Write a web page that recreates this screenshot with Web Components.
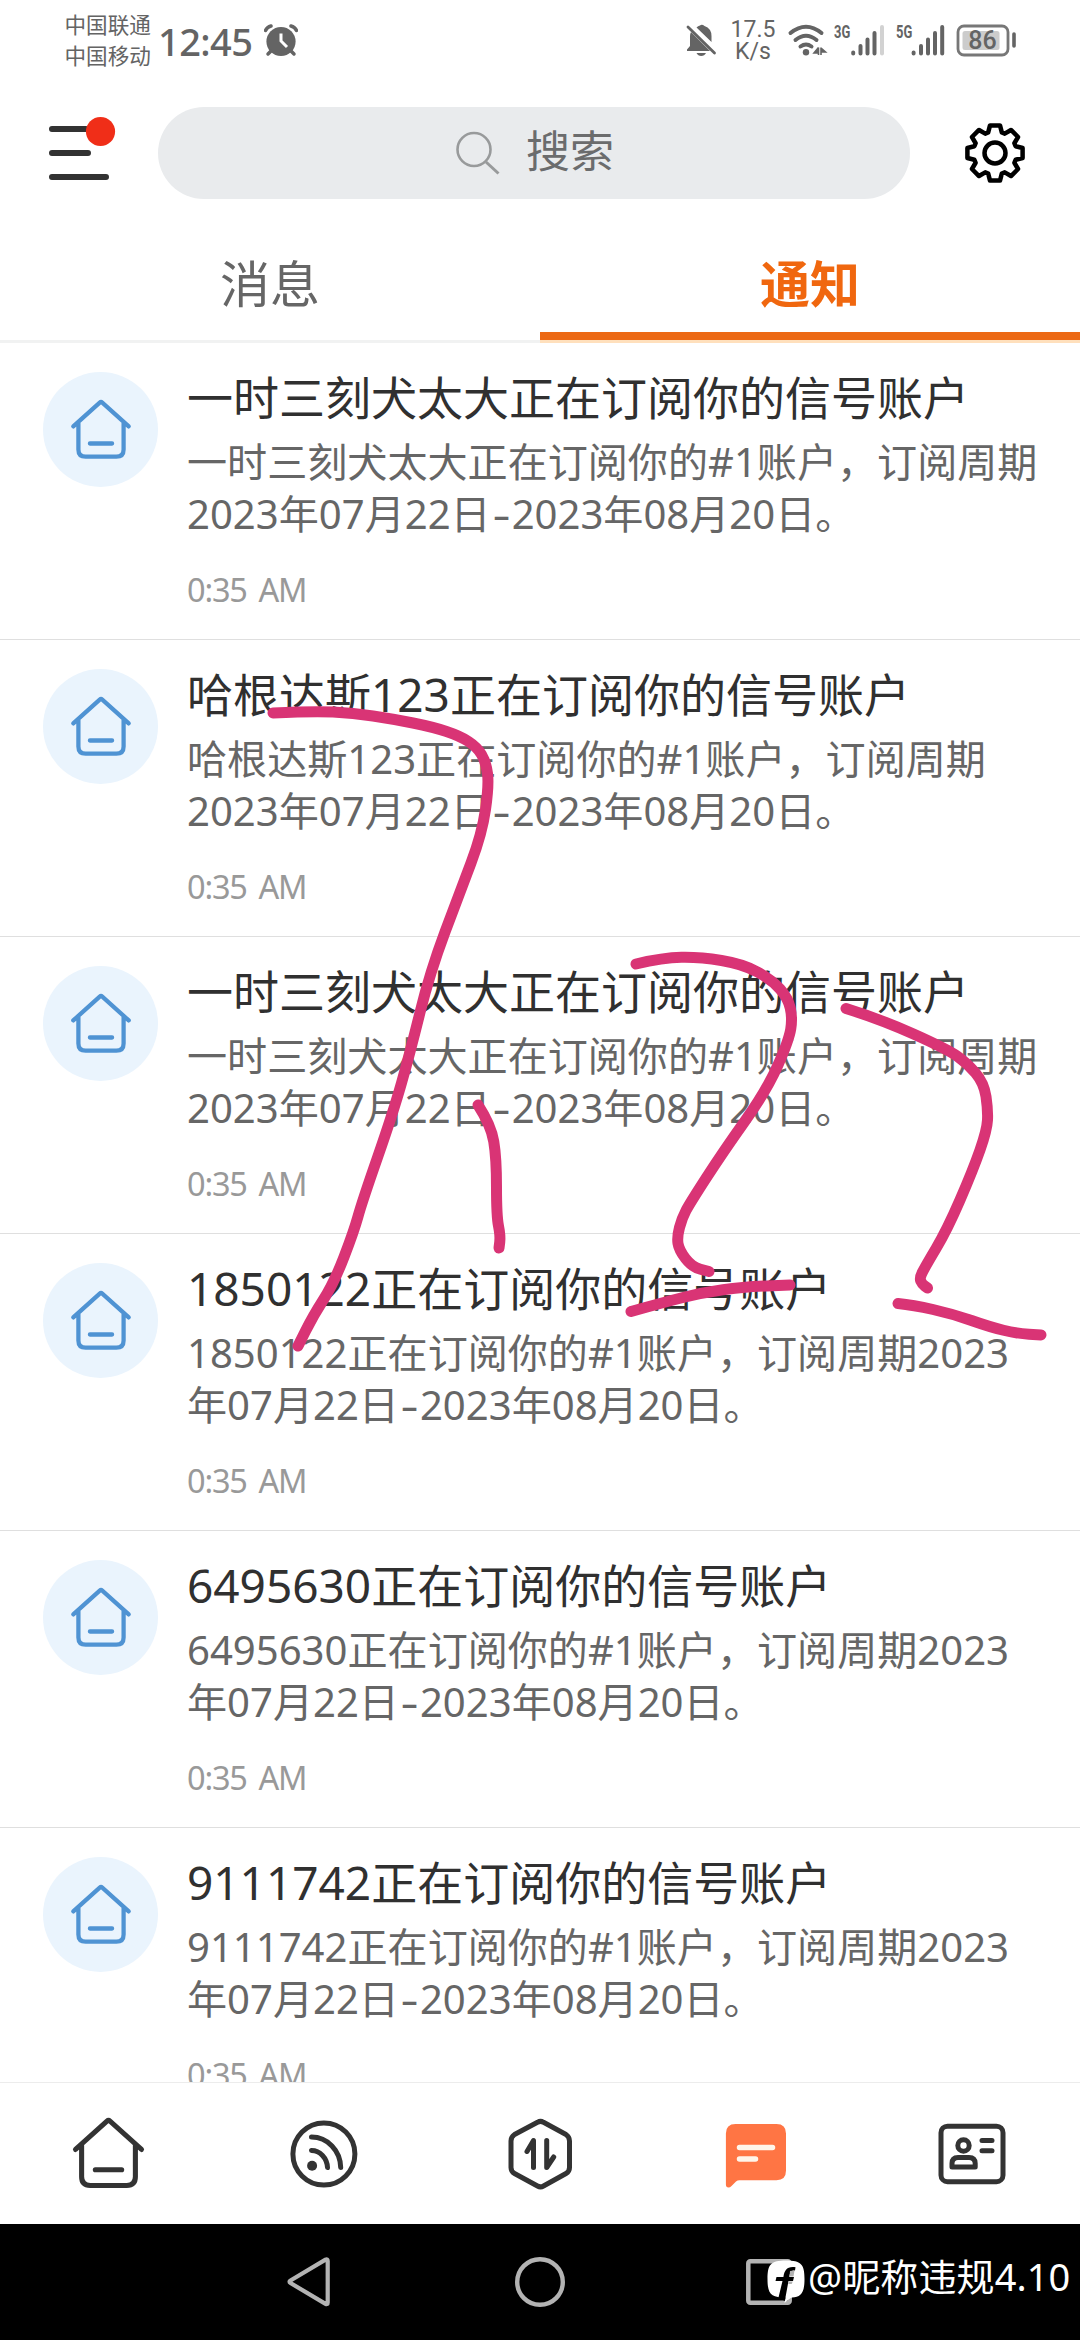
<!DOCTYPE html>
<html lang="zh-CN">
<head>
<meta charset="utf-8">
<title>通知</title>
<style>
html,body{margin:0;padding:0;background:#fff}
body{width:1080px;height:2340px;overflow:hidden;font-family:"Noto Sans","Noto Sans CJK SC",sans-serif}
</style>
</head>
<body>
<phone-screen></phone-screen>
<script>
const define = (name, html, setup) => customElements.define(name, class extends HTMLElement {
  constructor() {
    super();
    const t = document.createElement('template');
    t.innerHTML = html;
    this.attachShadow({ mode: 'open' }).appendChild(t.content.cloneNode(true));
  }
  connectedCallback() { if (setup) setup(this, this.shadowRoot); }
});

define('status-bar', `
<style>
:host{display:flex;height:82px;padding:0 64px 0 65px;box-sizing:border-box;color:#646464;align-items:flex-start}
svg{display:block;flex:none}
.carriers{display:flex;flex-direction:column;width:93px;padding-top:8px;font:21.6px/31px "Noto Sans CJK SC",sans-serif;white-space:nowrap;text-indent:-.5px}
.time{width:106px;font:500 38px/50px "Noto Sans",sans-serif;padding-top:16px;letter-spacing:-.6px}
.grow{flex:1}
.speed{width:62px;box-sizing:border-box;padding:19px 0 0 8px;font:23px/22px Roboto,sans-serif;text-align:center;white-space:nowrap;display:flex;flex-direction:column}
.net{font:bold 18.500px/20px "Roboto",sans-serif;padding-top:22px;width:15.500px;white-space:nowrap}
.net span{display:inline-block;transform:scaleX(.7);transform-origin:0 0}
.net.second{margin-left:10.500px;width:15px}
.bat{width:60px;height:34px;margin:24px 0 0 11px;display:grid}
.bat>*{grid-area:1/1}
.bat span{font:500 25px/33px Roboto,sans-serif;width:53px;text-align:center}
</style>
<div class="carriers"><span>中国联通</span><span>中国移动</span></div>
<div class="time">12:45</div>
<svg width="34" height="60" viewBox="264 0 34 60"><circle cx="281" cy="41.500" r="14.600" fill="#646464"/><path d="M265.500 30.500Q267 27 271 26M296.500 30.500Q295 27 291 26" fill="none" stroke="#646464" stroke-width="3.500" stroke-linecap="round"/><path d="M271 51l-3 3M291 51l3 3" stroke="#646464" stroke-width="3.500" stroke-linecap="round"/><path d="M281 33.500v7.500l6 6" fill="none" stroke="#fff" stroke-width="3"/></svg>
<div class="grow"></div>
<svg width="32" height="60" viewBox="686 0 32 60"><path d="M696.500 27.500Q698 26 700 25.500Q702 24 704.500 26Q711.500 28.500 711.500 36V42zM691 32L710 51H687V49.500L690 46V36Q690 34 691 32zM696.500 53H706Q704.500 56 701.200 56Q698 56 696.500 53z" fill="#646464"/><path d="M688 27L714.500 53" stroke="#646464" stroke-width="2.800" stroke-linecap="round"/></svg>
<div class="speed"><span>17.5</span><span>K/s</span></div>
<svg width="54" height="60" viewBox="780 0 54 60"><g fill="none" stroke="#646464" stroke-width="4" stroke-linecap="round"><path d="M790.500 33Q806 20.500 821.500 33M795.500 40Q806 31.500 816.500 40M800.500 46.500Q806 42.500 811.500 46.500"/></g><circle cx="806" cy="52.200" r="3.200" fill="#646464"/><path d="M818.500 47.500v7.500M818.500 47.500l-4.500 5.500h4.500M821 47.500v7.500M821 48l4.500 4h-4.500" stroke="#646464" stroke-width="1.600" fill="#646464"/></svg>
<div class="net"><span>3G</span></div>
<svg width="36" height="60" viewBox="849.500 0 36 60"><g stroke="#646464" stroke-width="4" stroke-linecap="round"><path d="M852.700 52.500v1M860 46v7.500M867 39.500v14M874 33v20.500"/><path d="M881.500 27v26.500" stroke="#d2d2d2"/></g></svg>
<div class="net second"><span>5G</span></div>
<svg width="34" height="60" viewBox="911 0 34 60"><path d="M913.600 52.500v1M921 46v7.500M928 39.500v14M935 33v20.500M942.200 27v26.500" stroke="#646464" stroke-width="4" stroke-linecap="round"/></svg>
<div class="bat"><svg width="60" height="34" viewBox="0 0 60 34"><rect x="2" y="2" width="50" height="29" rx="6" fill="none" stroke="#777" stroke-width="2.800"/><rect x="6.500" y="7" width="37" height="19" rx="2.500" fill="#ccc"/><path d="M58 10v12" stroke="#646464" stroke-width="3.600" stroke-linecap="round"/></svg><span>86</span></div>
`);

define('menu-button', `
<style>:host{display:block;width:74px;height:70px}svg{display:block}</style>
<svg width="74" height="70" viewBox="46 113 74 70"><path d="M52 129h34M52 153h36M52 177h54" stroke="#323232" stroke-width="6" stroke-linecap="round"/><circle cx="100.500" cy="131.500" r="14.600" fill="#f02e18"/></svg>`);

define('search-box', `
<style>
:host{display:flex;width:752px;height:92px;border-radius:46px;background:#e9ebed;align-items:center;box-sizing:border-box;padding-left:296px;color:#6b6c6d;font:44px/60px "Noto Sans CJK SC",sans-serif}
svg{display:block;margin-right:26px}
span{padding-bottom:8px}
</style>
<svg width="46" height="46" viewBox="454 130 46 46"><circle cx="474" cy="149.500" r="16.500" fill="none" stroke="#989a9b" stroke-width="2.600"/><path d="M486 162L498.500 173.500" stroke="#989a9b" stroke-width="3"/></svg><span><slot></slot></span>`);

define('gear-button', `
<style>:host{display:block;width:64px;height:64px}svg{display:block}</style>
<svg width="64" height="64" viewBox="-32 -32 64 64" fill="none" stroke="#000" stroke-width="4.500" stroke-linejoin="round"><path/><circle r="10.500"/></svg>`,
(el, root) => {
  const tooth = [[-6.8, -20.6], [-5, -27.6], [5, -27.6], [6.8, -20.6]];
  const pts = [];
  for (let k = 0; k < 8; k++) {
    const a = k * Math.PI / 4, c = Math.cos(a), s = Math.sin(a);
    for (const [x, y] of tooth) pts.push((x * c - y * s).toFixed(2) + ' ' + (x * s + y * c).toFixed(2));
  }
  root.querySelector('path').setAttribute('d', 'M' + pts.join('L') + 'Z');
});

define('top-bar', `
<style>:host{display:flex;height:142px;box-sizing:border-box;padding:25px 0 0 46px;align-items:flex-start}menu-button{margin:6px 38px 0 0}gear-button{margin:14px 0 0 53px}</style>
<menu-button></menu-button><search-box>搜索</search-box><gear-button></gear-button>`);

define('tab-item', `
<style>
:host{display:flex;flex:1;height:119px;box-sizing:border-box;justify-content:center;border-bottom:3px solid #f1f2f2;padding-bottom:8px;color:#666;font:50px/114px "Noto Sans CJK SC",sans-serif}
:host([active]){color:#f0670f;font-weight:700;padding-bottom:0;border-bottom:3px solid #ffe0bd;box-shadow:inset 0 -8px #ec6914}
</style><slot></slot>`);

define('tab-strip', `<style>:host{display:flex}</style><slot></slot>`);

define('house-icon', `
<style>:host{display:block}svg{display:block}</style>
<svg viewBox="-34 -34 68 74" fill="none" stroke="currentColor" stroke-linecap="round" stroke-linejoin="round"><path d="M-32.500 -3L-1.500 -31Q0 -32.300 1.500 -31L32.500 -3M-26.500 -8V24Q-26.500 32.500 -18 32.500H18Q26.500 32.500 26.500 24V-8M-13 17H13"/></svg>`,
(el, root) => {
  const s = root.querySelector('svg');
  s.setAttribute('width', el.getAttribute('size'));
  s.setAttribute('height', el.getAttribute('size') * 74 / 68);
  s.setAttribute('stroke-width', '5');
  s.style.overflow = 'visible';
});

define('notice-row', `
<style>
:host{display:flex;height:297px;box-sizing:border-box;border-bottom:1px solid #dfdfdf;padding:29px 0 0 43px;gap:29px;flex:none}
.avatar{display:flex;width:115px;height:115px;border-radius:50%;background:#eaf4fd;color:#4f93d3;justify-content:center;align-items:center;flex:none}
.avatar house-icon{margin-top:4px}
.text{display:flex;flex-direction:column;white-space:nowrap;margin-top:-5px}
.title{font-size:46px;line-height:60px;color:#303030}
.body{font-size:40.080px;line-height:52.500px;color:#666;margin-top:8.500px}
.time{font-size:32.500px;line-height:44px;color:#999;margin-top:27.500px;letter-spacing:-1.200px;word-spacing:4.500px}
</style>
<div class="avatar"><house-icon size="58"></house-icon></div>
<div class="text"><div class="title"><slot name="title"></slot></div><div class="body"><slot></slot></div><div class="time"><slot name="time"></slot></div></div>`);

define('range-dash', `
<style>:host{display:inline-block;width:21px;text-align:center}span{display:inline-block;transform:scaleX(1.4)}</style><span><slot></slot></span>`);

define('notice-list', `
<style>:host{display:flex;flex-direction:column;height:1739px;overflow:hidden}</style><slot></slot>`);

define('bottom-nav', `
<style>
:host{display:flex;height:142px;border-top:1px solid #ececec;box-sizing:border-box;background:#fff;color:#333}
div{flex:1;display:flex;justify-content:center;align-items:center}
svg{display:block;overflow:visible}
house-icon{padding-top:5px}
</style>
<div><house-icon size="69"></house-icon></div>
<div><svg width="72" height="72" viewBox="287.500 2117.500 72 72" fill="none" stroke="#333" stroke-width="5" stroke-linecap="round"><circle cx="323.400" cy="2153.500" r="31"/><circle cx="311.600" cy="2165.200" r="5" fill="#333" stroke="none"/><path d="M311 2150A16 18 0 0 1 327 2167M311 2136.500A29.200 31 0 0 1 340.200 2167"/></svg></div>
<div><svg width="72" height="72" viewBox="503.500 2117.500 72 72" fill="none" stroke="#333" stroke-width="5" stroke-linecap="round" stroke-linejoin="round"><path d="M537 2121.800Q540 2120 543 2121.800L565.500 2134Q569 2136.300 569 2140.500V2167Q569 2171 565.500 2173L543 2185.500Q540 2187.200 537 2185.500L514 2173Q510.500 2171 510.500 2167V2140.500Q510.500 2136.300 514 2134ZM526.500 2151L533 2140V2167M546.200 2140V2167L553.200 2156.500"/></svg></div>
<div><svg width="72" height="72" viewBox="719.500 2117.500 72 72"><path d="M735 2123.500H776Q785.500 2123.500 785.500 2133V2170Q785.500 2179.700 776 2179.700H739Q737 2179.700 735.500 2181L731 2185.500Q729.500 2187 728 2187Q725.400 2187 725.400 2184V2133Q725.400 2123.500 735 2123.500Z" fill="#ff7544"/><path d="M739 2147H772M739 2158.500H755" stroke="#fff5ea" stroke-width="5.500" stroke-linecap="round"/></svg></div>
<div><svg width="72" height="72" viewBox="935.500 2117.500 72 72" fill="none" stroke="#333" stroke-width="5" stroke-linecap="round" stroke-linejoin="round"><rect x="940.500" y="2125.700" width="62" height="55.500" rx="6.500"/><circle cx="963" cy="2145" r="5.700"/><path d="M951.500 2166.500V2163Q951.500 2157 957.500 2157H968.500Q974.700 2157 974.700 2163V2166.500ZM981.500 2140H991.500M981.500 2150.300H991.500"/></svg></div>`);

define('system-nav', `
<style>
:host{display:flex;height:116px;background:#000;align-items:center;justify-content:center;box-sizing:border-box}
svg{display:block}
.back{margin-right:182px}
.recent{margin:0 3px 0 181px}
.mark{position:absolute;left:767px;top:2250px;display:flex;align-items:flex-start;color:#fff;font:38px/52px "Noto Sans","Noto Sans CJK SC",sans-serif;letter-spacing:.1px;white-space:nowrap}
.mark svg{margin:8px 3px 0 0}
</style>
<svg class="back" width="48" height="56" viewBox="285 2254 48 56"><path d="M290.500 2280.500L325.500 2259.600Q327.700 2258.500 327.700 2261V2302.500Q327.700 2305 325.500 2303.900L290.500 2283Q288.500 2281.700 290.500 2280.500Z" fill="none" stroke="#b3b3b3" stroke-width="4.200"/></svg>
<svg width="50" height="50" viewBox="0 0 50 50"><circle cx="25" cy="25" r="22.800" fill="none" stroke="#b3b3b3" stroke-width="4.400"/></svg>
<svg class="recent" width="46" height="46" viewBox="0 0 46 46"><rect x="2.300" y="2.300" width="41.400" height="41.400" rx="2" fill="none" stroke="#b3b3b3" stroke-width="4.500"/></svg>
<div class="mark"><svg width="38" height="48" viewBox="767 2258 38 48"><path d="M786 2260.500C801 2260.500 804.500 2264 804.500 2279C804.500 2293 801 2297 792 2297.500Q789 2298.500 784.500 2303L785.500 2297.600C771 2297.500 767.500 2294 767.500 2279C767.500 2264 771 2260.500 786 2260.500Z" fill="#fff"/><path d="M795.500 2267.200C787 2266 784.500 2270 783.400 2277H776.500L775.500 2281H782.500L778.500 2297.500L784.800 2301L788.500 2281H793L794 2277H789.300C790 2272.500 791 2270 795 2270.500Z" fill="#000"/><path d="M790 2271l4.500-.5-1 6h-4zM788.700 2281.500h4l-1 2.500h-3.500z" fill="#b3b3b3"/></svg><span>@昵称违规4.10</span></div>`);

define('ink-layer', `
<style>:host{position:absolute;left:0;top:0;width:1080px;height:2340px;pointer-events:none}svg{display:block}</style>
<svg width="1080" height="2340" fill="none" stroke="#d93475" stroke-width="11" stroke-linecap="round" stroke-linejoin="round"></svg>`,
(el, root) => {
  const strokes = [
    [273,713, 313,711, 353,713, 393,719, 433,727, 460,736, 477,747, 486,762, 489,785, 482,834, 460,892, 430,972, 410,1053, 393,1113, 362,1202, 354,1231, 334,1283, 313,1316, 298,1346],
    [478,1105, 491,1125, 496.5,1158, 496.5,1216, 500.5,1236, 499,1248],
    [636,964, 663,957.7, 700,957, 743,964, 772,980, 788,998, 792.5,1018, 789,1040, 767,1090, 723,1152, 690,1203, 682,1218, 677,1237, 679,1250, 692,1267, 709,1271.5],
    [631,1311.5, 663,1302.5, 703,1292.5, 743,1287, 790,1285],
    [846,1008.5, 880,1019, 947,1049, 967,1063, 984,1083, 988,1110, 987,1130, 973,1170, 947,1230, 925,1267, 919.5,1278, 922,1284, 927.5,1288],
    [898,1303.5, 913,1305, 953,1314, 990,1327, 1017,1333.5, 1041,1335]
  ];
  const svg = root.querySelector('svg');
  for (const p of strokes) {
    let d = `M${p[0]} ${p[1]}`;
    const n = p.length;
    for (let i = 2; i < n - 2; i += 2) d += `Q${p[i]} ${p[i + 1]} ${(p[i] + p[i + 2]) / 2} ${(p[i + 1] + p[i + 3]) / 2}`;
    d += `L${p[n - 2]} ${p[n - 1]}`;
    const path = document.createElementNS('http://www.w3.org/2000/svg', 'path');
    path.setAttribute('d', d);
    svg.appendChild(path);
  }
});

define('phone-screen', `
<style>:host{display:flex;flex-direction:column;position:relative;width:1080px;height:2340px;overflow:hidden;background:#fff}</style>
<status-bar></status-bar>
<top-bar></top-bar>
<tab-strip><tab-item>消息</tab-item><tab-item active>通知</tab-item></tab-strip>
<notice-list>
<notice-row><span slot="title">一时三刻犬太大正在订阅你的信号账户</span>一时三刻犬太大正在订阅你的#1账户，订阅周期<br>2023年07月22日<range-dash>-</range-dash>2023年08月20日。<span slot="time">0:35 AM</span></notice-row>
<notice-row><span slot="title">哈根达斯123正在订阅你的信号账户</span>哈根达斯123正在订阅你的#1账户，订阅周期<br>2023年07月22日<range-dash>-</range-dash>2023年08月20日。<span slot="time">0:35 AM</span></notice-row>
<notice-row><span slot="title">一时三刻犬太大正在订阅你的信号账户</span>一时三刻犬太大正在订阅你的#1账户，订阅周期<br>2023年07月22日<range-dash>-</range-dash>2023年08月20日。<span slot="time">0:35 AM</span></notice-row>
<notice-row><span slot="title">1850122正在订阅你的信号账户</span>1850122正在订阅你的#1账户，订阅周期2023<br>年07月22日<range-dash>-</range-dash>2023年08月20日。<span slot="time">0:35 AM</span></notice-row>
<notice-row><span slot="title">6495630正在订阅你的信号账户</span>6495630正在订阅你的#1账户，订阅周期2023<br>年07月22日<range-dash>-</range-dash>2023年08月20日。<span slot="time">0:35 AM</span></notice-row>
<notice-row><span slot="title">9111742正在订阅你的信号账户</span>9111742正在订阅你的#1账户，订阅周期2023<br>年07月22日<range-dash>-</range-dash>2023年08月20日。<span slot="time">0:35 AM</span></notice-row>
</notice-list>
<bottom-nav></bottom-nav>
<system-nav></system-nav>
<ink-layer></ink-layer>`);
</script>
</body>
</html>
